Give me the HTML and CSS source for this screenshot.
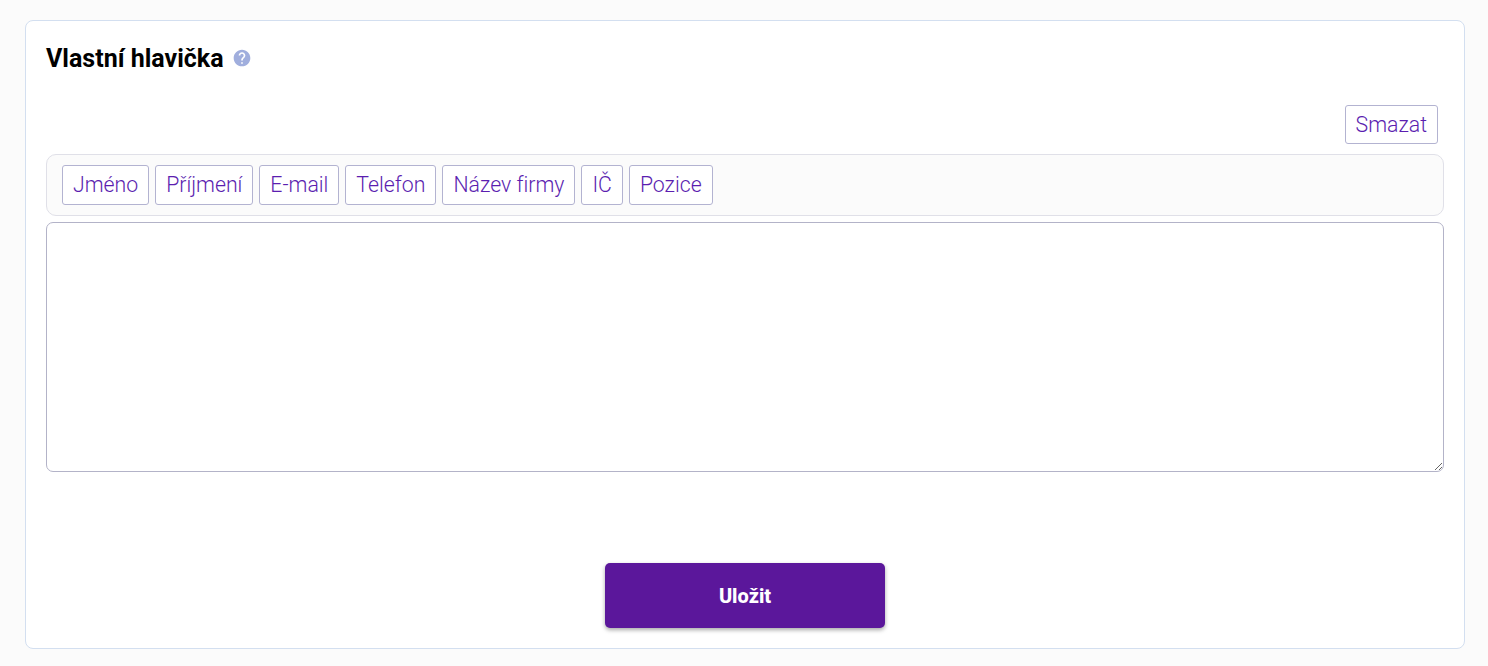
FILE: index.html
```html
<!DOCTYPE html>
<html lang="cs">
<head>
    <meta charset="UTF-8">
    <title>Vlastní hlavička</title>
    <link rel="stylesheet" href="styles.css">
</head>
<body>
    <div class="card">
        <div class="card-title">
            <h2>Vlastní hlavička</h2>
            <svg class="help-icon" width="20" height="20" viewBox="0 0 24 24">
                <path fill="#a0aedd" d="M12 2C6.48 2 2 6.48 2 12s4.48 10 10 10 10-4.48 10-10S17.52 2 12 2zm1 17h-2v-2h2v2zm2.07-7.75l-.9.92C13.45 12.9 13 13.5 13 15h-2v-.5c0-1.1.45-2.1 1.17-2.83l1.24-1.26c.37-.36.59-.86.59-1.41 0-1.1-.9-2-2-2s-2 .9-2 2H8c0-2.21 1.79-4 4-4s4 1.79 4 4c0 .88-.36 1.68-.93 2.25z"/>
            </svg>
        </div>
        <div class="clear-row">
            <button class="tag-btn">Smazat</button>
        </div>
        <div class="toolbar">
            <button class="tag-btn">Jméno</button>
            <button class="tag-btn">Příjmení</button>
            <button class="tag-btn">E-mail</button>
            <button class="tag-btn">Telefon</button>
            <button class="tag-btn">Název firmy</button>
            <button class="tag-btn">IČ</button>
            <button class="tag-btn">Pozice</button>
        </div>
        <textarea class="editor"></textarea>
        <div class="actions">
            <button class="save-btn">Uložit</button>
        </div>
    </div>
</body>
</html>
```

FILE: styles.css
```css
html, body {
    height: 100%;
}
body {
    margin: 0;
    padding: 20px 23px 17px 25px;
    box-sizing: border-box;
    background-color: #fbfbfb;
    font-family: Roboto, "Liberation Sans", sans-serif;
}
.card {
    box-sizing: border-box;
    height: 629px;
    padding: 0 20px;
    background: white;
    border: 1px solid #d3dff0;
    border-radius: 8px;
}
.card-title {
    display: flex;
    align-items: center;
    gap: 8px;
    height: 74px;
}
.card-title h2 {
    margin: 0;
    font-size: 25px;
    font-weight: 700;
    color: black;
}
.clear-row {
    display: flex;
    justify-content: flex-end;
    padding: 10px 6px 10px 0;
}
.tag-btn {
    box-sizing: border-box;
    height: 39px;
    padding: 0 10px 1px;
    background: white;
    border: 1px solid #b3b3d1;
    border-radius: 3px;
    color: #5b1eb0;
    font-family: inherit;
    font-size: 21.28px;
    font-weight: 300;
    font-variant-ligatures: none;
}
.toolbar {
    box-sizing: border-box;
    display: flex;
    align-items: center;
    gap: 6px;
    height: 62px;
    padding: 0 15px;
    background: #fbfbfb;
    border: 1px solid #e0e0e8;
    border-radius: 10px;
}
.toolbar .tag-btn {
    height: 40px;
}
.editor {
    display: block;
    box-sizing: border-box;
    width: 100%;
    height: 250px;
    margin-top: 6px;
    background: white;
    border: 1px solid #b3b3c8;
    border-radius: 7px;
    resize: vertical;
}
.actions {
    display: flex;
    justify-content: center;
    padding-top: 91px;
}
.save-btn {
    width: 280px;
    height: 65px;
    background: #5b179b;
    border: none;
    border-radius: 5px;
    box-shadow: 0 2px 4px rgba(0, 0, 0, 0.35);
    color: white;
    font-family: inherit;
    font-size: 20px;
    font-weight: 800;
}
```
